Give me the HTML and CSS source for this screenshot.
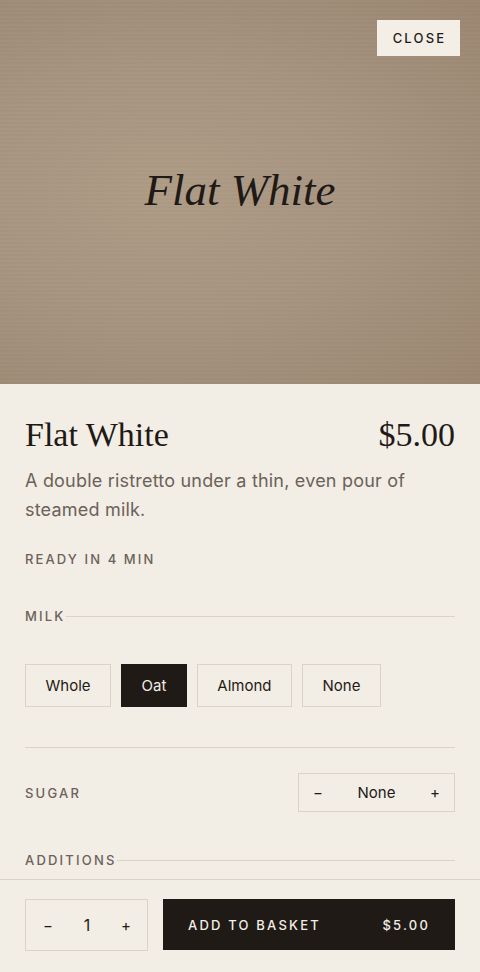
FILE: index.html
```html
<!DOCTYPE html>
<html lang="en">
<head>
    <meta charset="UTF-8">
    <meta name="viewport" content="width=device-width, initial-scale=1.0">
    <title>Flat White</title>
    <link rel="stylesheet" href="styles.css">
</head>
<body>
    <div class="sheet">
        <div class="hero">
            <button class="close">Close</button>
            <h2 class="hero-title">Flat White</h2>
        </div>

        <div class="details">
            <div class="title-row">
                <h1>Flat White</h1>
                <span class="price">$5.00</span>
            </div>
            <p class="desc">A double ristretto under a thin, even pour of steamed milk.</p>
            <p class="ready">Ready in 4 min</p>

            <div class="section-label">Milk</div>
            <div class="options">
                <button class="option">Whole</button>
                <button class="option selected">Oat</button>
                <button class="option">Almond</button>
                <button class="option">None</button>
            </div>

            <div class="sugar-row">
                <span class="label">Sugar</span>
                <div class="stepper sugar">
                    <button>&minus;</button>
                    <span>None</span>
                    <button>+</button>
                </div>
            </div>

            <div class="section-label additions">Additions</div>
        </div>

        <div class="footer">
            <div class="stepper qty">
                <button>&minus;</button>
                <span>1</span>
                <button>+</button>
            </div>
            <button class="add">
                <span>Add to basket</span>
                <span>$5.00</span>
            </button>
        </div>
    </div>
</body>
</html>
```

FILE: styles.css
```css
* {
    box-sizing: border-box;
}
body {
    margin: 0;
    background: #f2ede5;
    font-family: 'Inter', sans-serif;
    color: #1f1a16;
}
button {
    font-family: inherit;
    cursor: pointer;
}
.sheet {
    height: 972px;
    display: flex;
    flex-direction: column;
    overflow: hidden;
}
.hero {
    position: relative;
    height: 384px;
    flex-shrink: 0;
    display: flex;
    align-items: center;
    justify-content: center;
    background:
        repeating-linear-gradient(180deg, rgba(255, 255, 255, 0.012) 0 2px, rgba(0, 0, 0, 0.01) 2px 4px),
        radial-gradient(ellipse at 35% 50%, #ae9c86 0%, #a79481 45%, #9b8770 100%);
}
.close {
    position: absolute;
    top: 20px;
    right: 20px;
    width: 83px;
    height: 36px;
    border: none;
    background: #f3eee6;
    color: #1f1a16;
    font-size: 13px;
    font-weight: 500;
    letter-spacing: 2.2px;
    text-transform: uppercase;
    padding: 0 0 0 2px;
}
.hero-title {
    margin: 0 0 4px;
    font-family: 'Liberation Serif', serif;
    font-style: italic;
    font-weight: 400;
    font-size: 45px;
    color: #1f1a16;
}
.details {
    flex: 1;
    padding: 0 25px;
}
.title-row {
    display: flex;
    justify-content: space-between;
    align-items: baseline;
    margin-top: 32px;
}
h1, .price {
    margin: 0;
    font-family: 'Liberation Serif', serif;
    font-weight: 400;
    font-size: 34px;
    line-height: 38px;
    color: #1f1a16;
}
.desc {
    margin: 12px 0 0;
    font-size: 18px;
    line-height: 29px;
    letter-spacing: 0.2px;
    color: #6b6259;
    padding-right: 40px;
}
.ready {
    margin: 27px 0 0;
    font-size: 13px;
    font-weight: 500;
    letter-spacing: 2.1px;
    text-transform: uppercase;
    color: #6b6259;
}
.section-label {
    display: flex;
    align-items: center;
    margin-top: 41px;
    font-size: 13px;
    font-weight: 500;
    letter-spacing: 2.2px;
    text-transform: uppercase;
    color: #6b6259;
}
.section-label::after {
    content: "";
    flex: 1;
    height: 1px;
    background: #dcd3c6;
}
.section-label.additions {
    margin-top: 40px;
}
.options {
    display: flex;
    gap: 10px;
    margin-top: 40px;
    padding-bottom: 40px;
    border-bottom: 1px solid #dcd3c6;
}
.option {
    height: 43px;
    padding: 0 19.5px;
    border: 1px solid #dcd3c6;
    background: transparent;
    font-size: 15px;
    color: #1f1a16;
}
.option.selected {
    background: #1f1a16;
    border-color: #1f1a16;
    color: #f2ede5;
}
.sugar-row {
    display: flex;
    justify-content: space-between;
    align-items: center;
    margin-top: 25px;
}
.label {
    font-size: 13px;
    font-weight: 500;
    letter-spacing: 2.2px;
    text-transform: uppercase;
    color: #6b6259;
}
.stepper {
    display: flex;
    align-items: center;
    justify-content: space-between;
    border: 1px solid #dcd3c6;
}
.stepper button {
    border: none;
    background: transparent;
    font-size: 15px;
    color: #1f1a16;
    height: 100%;
    padding: 0;
}
.stepper span {
    font-size: 15px;
}
.sugar {
    width: 157px;
    height: 39px;
}
.sugar button {
    width: 38px;
}
.footer {
    flex-shrink: 0;
    height: 93px;
    display: flex;
    gap: 15px;
    padding: 19px 25px 21px;
    border-top: 1px solid #dcd3c6;
}
.qty {
    width: 123px;
    height: 52px;
    padding: 0 11px 0 12px;
}
.qty button {
    width: 20px;
}
.qty span {
    font-size: 16px;
}
.add {
    flex: 1;
    height: 51px;
    display: flex;
    justify-content: space-between;
    align-items: center;
    padding: 0 25px;
    border: none;
    background: #1f1a16;
    color: #f2ede5;
    font-size: 13px;
    font-weight: 500;
    letter-spacing: 2.2px;
    text-transform: uppercase;
}
```
